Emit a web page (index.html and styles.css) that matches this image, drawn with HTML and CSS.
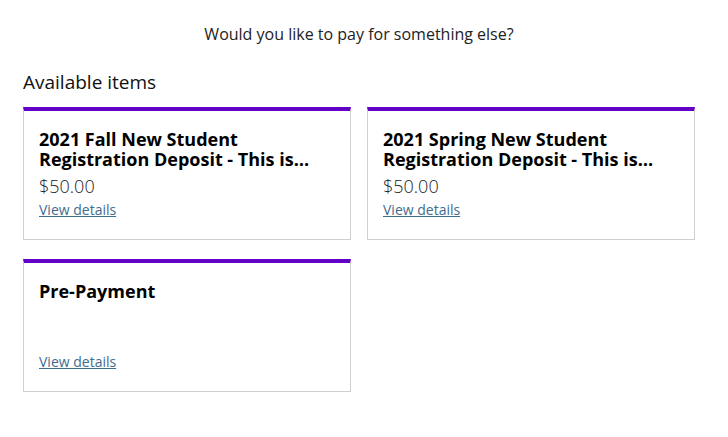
FILE: index.html
```html
<!DOCTYPE html>
<html lang="en">
<head>
    <meta charset="UTF-8">
    <meta name="viewport" content="width=device-width, initial-scale=1.0">
    <title>Payments</title>
    <link rel="stylesheet" href="styles.css">
</head>
<body>
    <div class="page">
        <p class="prompt">Would you like to pay for something else?</p>
        <h2 class="section-title">Available items</h2>
        <div class="items">
            <div class="item-card">
                <h3 class="item-name">2021 Fall New Student Registration Deposit - This is…</h3>
                <div class="item-price">$50.00</div>
                <a href="#" class="item-link">View details</a>
            </div>
            <div class="item-card">
                <h3 class="item-name">2021 Spring New Student Registration Deposit - This is…</h3>
                <div class="item-price">$50.00</div>
                <a href="#" class="item-link">View details</a>
            </div>
            <div class="item-card">
                <h3 class="item-name">Pre-Payment</h3>
                <div class="item-price"></div>
                <a href="#" class="item-link">View details</a>
            </div>
        </div>
    </div>
</body>
</html>
```

FILE: styles.css
```css
body {
    margin: 0;
    padding: 0;
    font-family: "Open Sans", "Noto Sans", Arial, sans-serif;
    color: #1b1b1b;
    background: #fff;
}
.page {
    width: 672px;
    padding: 22px 0 0 23px;
}
.prompt {
    margin: 0;
    font-size: 16px;
    line-height: 24px;
    text-align: center;
    color: #222;
}
.section-title {
    margin: 24px 0 13px;
    font-size: 19px;
    line-height: 24px;
    font-weight: 400;
    color: #111;
}
.items {
    display: grid;
    grid-template-columns: 328px 328px;
    column-gap: 16px;
    row-gap: 19px;
}
.item-card {
    border: 1px solid #cfcfcf;
    border-top: 4px solid #6200c8;
    padding: 18px 15px 19px;
}
.item-name {
    margin: 0;
    font-size: 18px;
    line-height: 20px;
    font-weight: 700;
    color: #000;
    min-height: 40px;
}
.item-price {
    margin-top: 5px;
    height: 24px;
    font-size: 18px;
    line-height: 24px;
    font-weight: 300;
    color: #222;
}
.item-link {
    display: block;
    width: max-content;
    margin-top: 2px;
    font-size: 14px;
    line-height: 20px;
    color: #3e6d8e;
    text-decoration: underline;
}
```
